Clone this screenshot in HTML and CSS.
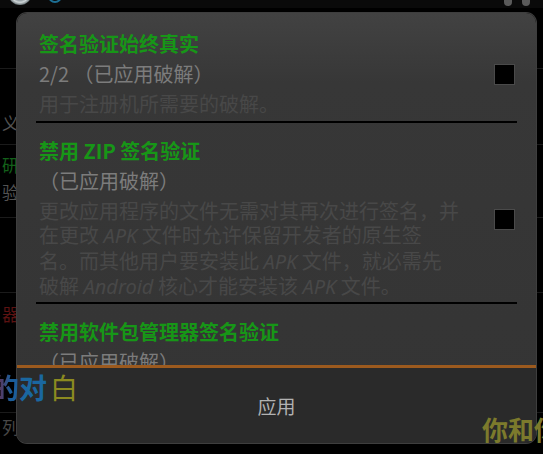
FILE: index.html
```html
<!DOCTYPE html>
<html lang="zh-CN">
<head>
<meta charset="utf-8">
<title>签名验证</title>
<link rel="stylesheet" href="styles.css">
</head>
<body>
<div class="page">
  <div class="topbar">
    <span class="tb-icon tb-globe"></span>
    <span class="tb-icon tb-blue"></span>
    <span class="tb-spacer"></span>
    <span class="tb-dot"></span>
    <span class="tb-dot"></span>
  </div>
  <div class="bg-list">
    <div class="bg-row r-a"></div>
    <div class="bg-row r-b"><span class="bg-t grey">义</span></div>
    <div class="bg-row r-c"><span class="bg-t green">研</span><span class="bg-t grey">验</span></div>
    <div class="bg-row r-d"></div>
    <div class="bg-row r-e"><span class="bg-t red">器</span></div>
    <div class="bg-row r-f"><span class="bg-t dim">列</span></div>
  </div>
</div>

<div class="dialog">
  <div class="list">
    <div class="item item-first">
      <div class="texts">
        <div class="title">签名验证始终真实</div>
        <div class="summary">2/2 （已应用破解）</div>
        <div class="desc">用于注册机所需要的破解。</div>
      </div>
      <span class="check"></span>
    </div>
    <div class="sep"></div>
    <div class="item">
      <div class="texts">
        <div class="title">禁用 ZIP 签名验证</div>
        <div class="summary">（已应用破解）</div>
        <div class="desc">
          <span class="line">更改应用程序的文件无需对其再次进行签名，并</span>
          <span class="line">在更改 <i>APK</i> 文件时允许保留开发者的原生签</span>
          <span class="line">名。而其他用户要安装此 <i>APK</i> 文件，就必需先</span>
          <span class="line">破解 <i>Android</i> 核心才能安装该 <i>APK</i> 文件。</span>
        </div>
      </div>
      <span class="check"></span>
    </div>
    <div class="sep"></div>
    <div class="item">
      <div class="texts">
        <div class="title">禁用软件包管理器签名验证</div>
        <div class="summary">（已应用破解）</div>
      </div>
    </div>
  </div>
  <div class="buttons">
    <button class="apply">应用</button>
  </div>
</div>

<div class="lyric lyric-left"><span class="ly-de">的</span><span class="ly-dui">对</span><span class="ly-bai">白</span></div>
<div class="lyric lyric-right">你和你</div>
</body>
</html>
```

FILE: styles.css
```css
html, body {
  margin: 0;
  padding: 0;
  background: #000;
  width: 543px;
  height: 454px;
  overflow: hidden;
  font-family: "Noto Sans CJK SC", "Noto Sans", sans-serif;
}

.page {
  width: 543px;
  height: 454px;
  background: #000;
}

.topbar {
  height: 8px;
  display: flex;
  align-items: flex-start;
  overflow: hidden;
  padding: 0 8px;
  background: #0a0a0a;
}
.tb-icon {
  display: block;
  flex: none;
  border-radius: 50%;
}
.tb-globe {
  width: 24px;
  height: 24px;
  margin-top: -19px;
  background: radial-gradient(circle, #9aa4a8 0 45%, #cfd6d8 55%, #6d777a 70%);
}
.tb-blue {
  width: 14px;
  height: 14px;
  margin-top: -11px;
  margin-left: 16px;
  border: 2px solid #1d6f94;
  box-sizing: border-box;
}
.tb-spacer { flex: 1; }
.tb-dot {
  width: 8px;
  height: 12px;
  margin-top: -6px;
  margin-left: 10px;
  border-radius: 4px;
  background: #5a5a5a;
}
.tb-dot:last-child { margin-right: 5px; }

.bg-list {
  display: flex;
  flex-direction: column;
}
.bg-row {
  border-bottom: 1px solid #1b1b1b;
  padding-left: 2px;
  display: flex;
  flex-direction: column;
  font-size: 17px;
  line-height: 27px;
  box-sizing: border-box;
}
.r-a { height: 61px; }
.r-b { height: 76px; padding-top: 40px; }
.r-c { height: 73px; padding-top: 6px; }
.r-d { height: 75px; }
.r-e { height: 120px; padding-top: 7px; }
.r-f { height: 40px; border-bottom: none; }
.bg-t { display: block; }
.grey { color: #535353; }
.green { color: #13601a; }
.red { color: #5c1212; }
.dim { color: #474747; }

.dialog {
  position: absolute;
  left: 17px;
  top: 13px;
  width: 519px;
  height: 430px;
  border-radius: 10px;
  overflow: hidden;
  display: flex;
  flex-direction: column;
  background: linear-gradient(#424242, #373737 70px, #343434);
  box-shadow: 0 0 0 1px #3e3e3e;
}

.list {
  flex: 1;
  overflow: hidden;
  display: flex;
  flex-direction: column;
}

.item {
  display: flex;
  align-items: center;
  padding: 13px 21px 2px 22px;
  flex: none;
}
.item-first {
  padding-top: 16px;
  padding-bottom: 4px;
}
.texts {
  flex: 1;
  min-width: 0;
}
.title {
  font-size: 20px;
  line-height: 30px;
  font-weight: 700;
  color: #179617;
  white-space: nowrap;
}
.summary {
  font-size: 20px;
  line-height: 30px;
  color: #7c7c7c;
  white-space: nowrap;
}
.desc {
  margin-top: 3px;
  font-size: 20px;
  line-height: 24.5px;
  color: #484848;
  white-space: nowrap;
}
.desc .line { display: block; }
.desc i { font-family: "Noto Sans", sans-serif; font-style: italic; }

.check {
  flex: none;
  width: 19px;
  height: 19px;
  margin-top: 4px;
  background: #000;
  border: 1px solid #4a4a4a;
}

.sep {
  flex: none;
  height: 2px;
  margin: 0 19px;
  background: #000;
}

.buttons {
  flex: none;
  height: 75px;
  border-top: 3px solid #9c5a1e;
  background: #2a2a2a;
  display: flex;
  align-items: center;
  justify-content: center;
}
.apply {
  background: none;
  border: none;
  padding: 0;
  font-family: "Noto Sans CJK SC", "Noto Sans", sans-serif;
  font-size: 19px;
  color: #b2b2b2;
  margin-top: -1px;
}

.lyric {
  position: absolute;
  font-family: "Noto Sans CJK SC", sans-serif;
  white-space: nowrap;
}
.lyric-left {
  left: -9px;
  top: 367px;
  font-size: 28px;
  line-height: 40px;
  font-weight: 700;
}
.ly-de {
  background: linear-gradient(90deg, #8a1a30, #1b5d9a 70%);
  -webkit-background-clip: text;
  background-clip: text;
  color: transparent;
}
.ly-dui { color: #1a67a0; }
.ly-bai { color: #8c8a20; font-weight: 400; margin-left: 3px; }
.lyric-right {
  left: 482px;
  top: 410px;
  font-size: 26px;
  line-height: 38px;
  font-weight: 700;
  color: #7c7a2c;
}
```
